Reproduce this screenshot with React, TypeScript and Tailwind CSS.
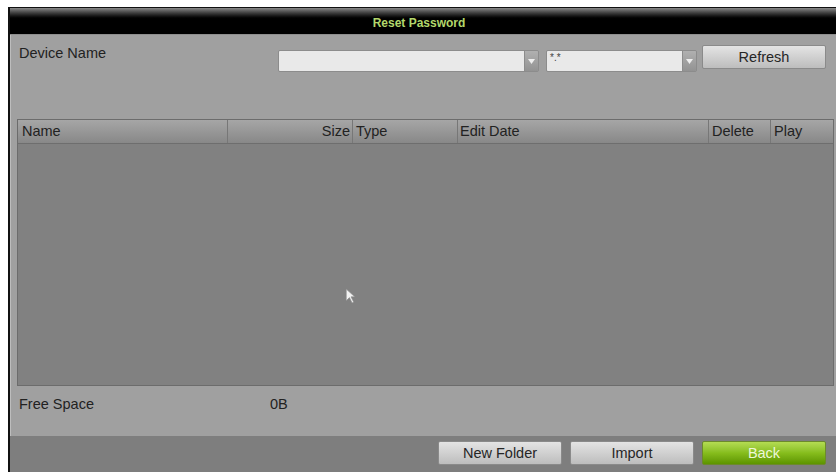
import React from "react";

const font = { fontFamily: '"Liberation Sans", Arial, sans-serif' };

function Dropdown({ width, value }: { width: string; value?: string }) {
  return (
    <div className={`flex h-[22px] ${width} overflow-hidden rounded-[2px] border border-[#8c8c8c]`}>
      <div className="flex-1 bg-[#e9e9e9] pl-[3px] text-[10px] leading-[14px] text-[#444]">{value}</div>
      <div className="flex w-[14px] items-center justify-center border-l border-[#8c8c8c] bg-linear-to-b from-[#b0b0b0] to-[#939393]">
        <svg width="7" height="5" viewBox="0 0 7 5">
          <path d="M0 0h7L3.5 5z" fill="#eeeeee" />
        </svg>
      </div>
    </div>
  );
}

function GrayButton({ label, width }: { label: string; width: string }) {
  return (
    <button
      className={`h-[24px] ${width} rounded-[2px] border border-[#8a8a8a] bg-linear-to-b from-[#e4e4e4] to-[#bdbdbd] text-[14.5px] leading-[22px] text-[#262626]`}
    >
      {label}
    </button>
  );
}

const columns = [
  { label: "Name", className: "text-left pl-[4px]" },
  { label: "Size", className: "text-right pr-[2px]" },
  { label: "Type", className: "text-left pl-[3px]" },
  { label: "Edit Date", className: "text-left pl-[2px]" },
  { label: "Delete", className: "text-left pl-[3px]" },
  { label: "Play", className: "text-left pl-[3px]" },
];

export default function App() {
  return (
    <div className="h-[472px] w-[836px] overflow-hidden bg-white pl-[8px] pt-[7px]" style={font}>
      <div className="relative flex h-[465px] flex-col border-l-2 border-t border-[#111] bg-[#a0a0a0]">
        {/* title bar */}
        <div className="flex h-[27px] items-center justify-center border-b border-[#8e8e8e] bg-linear-to-b from-[#8a8a8a] via-black via-45% to-black pr-[8px]">
          <span className="pt-[3px] text-[12px] font-bold text-[#b3d86c]">Reset Password</span>
        </div>

        <div className="flex flex-1 flex-col shadow-[inset_1px_0_0_#bdbdbd]">
          {/* device selector */}
          <div className="flex h-[84px] items-start pl-[9px] pt-[10px]">
            <div className="w-[259px] text-[14.5px] leading-[17px] text-[#222]">Device Name</div>
            <div className="mt-[5px] flex items-start gap-[7px]">
              <Dropdown width="w-[261px]" />
              <Dropdown width="w-[151px]" value="*.*" />
            </div>
            <div className="ml-[5px]">
              <GrayButton label="Refresh" width="w-[124px]" />
            </div>
          </div>

          {/* file list */}
          <div className="ml-[7px] mr-[2px] flex h-[267px] flex-col border border-[#6c6c6c] bg-[#818181]">
            <div className="grid h-[24px] grid-cols-[210px_125px_105px_251px_62px_63px] border-b border-[#6e6e6e] bg-linear-to-b from-[#a6a6a6] via-[#979797] to-[#888888] text-[14.5px] leading-[23px] text-[#222]">
              {columns.map((c, i) => (
                <div key={c.label} className={`${c.className} ${i < columns.length - 1 ? "border-r border-[#777]" : ""}`}>
                  {c.label}
                </div>
              ))}
            </div>
            <div className="flex-1" />
          </div>

          {/* free space */}
          <div className="flex h-[50px] items-start pl-[9px] pt-[10px] text-[14.5px] leading-[17px] text-[#222]">
            <div className="w-[251px]">Free Space</div>
            <div>0B</div>
          </div>

          {/* footer actions */}
          <div className="flex flex-1 items-start justify-end gap-[8px] bg-[#7e7e7e] pr-[10px] pt-[5px]">
            <GrayButton label="New Folder" width="w-[124px]" />
            <GrayButton label="Import" width="w-[124px]" />
            <button className="h-[24px] w-[124px] rounded-[2px] border border-[#6c8a2c] bg-linear-to-b from-[#b4dc52] via-[#86bd1c] to-[#5d9400] text-[14.5px] leading-[22px] text-[#eef7d8]">
              Back
            </button>
          </div>
        </div>

        {/* mouse pointer */}
        <svg className="absolute left-[335px] top-[280px]" width="11" height="16" viewBox="0 0 10 15">
          <path d="M1 1v11l3-3 2.5 5 1.5-.8L5.5 8.3H9z" fill="#f2f2f2" stroke="#8a8a8a" strokeWidth="0.6" />
        </svg>
      </div>
    </div>
  );
}
